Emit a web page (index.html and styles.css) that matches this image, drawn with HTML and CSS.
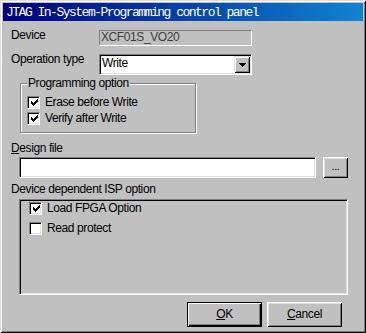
FILE: index.html
```html
<!DOCTYPE html>
<html lang="en">
<head>
  <meta charset="UTF-8">
  <meta name="viewport" content="width=device-width, initial-scale=1.0">
  <title>JTAG In-System-Programming control panel</title>
  <link rel="stylesheet" href="styles.css">
</head>
<body>

<div class="window">
  <div class="titlebar">JTAG In-System-Programming control panel</div>

  <div class="content">
    <div class="row row-device">
      <span class="label">Device</span>
      <div class="static-field">XCF01S_VO20</div>
    </div>

    <div class="row row-op">
      <span class="label">Operation type</span>
      <div class="combo">
        <span class="combo-text">Write</span>
        <span class="combo-btn">
          <svg width="7" height="4" viewBox="0 0 7 4" shape-rendering="crispEdges"><path d="M0 0h7v1h-7z M1 1h5v1h-5z M2 2h3v1h-3z M3 3h1v1h-1z" fill="#000"/></svg>
        </span>
      </div>
    </div>

    <div class="group">
      <span class="group-title">Programming option</span>
      <div class="group-body">
        <div class="check">
          <span class="box">
            <svg width="7" height="7" viewBox="0 0 7 7" shape-rendering="crispEdges"><path d="M6 0h1v1h-1z M5 1h2v1h-2z M0 2h1v1h-1z M4 2h3v1h-3z M0 3h2v1h-2z M3 3h3v1h-3z M0 4h5v1h-5z M1 5h3v1h-3z M2 6h1v1h-1z" fill="#000"/></svg>
          </span>
          <span class="check-text">Erase before Write</span>
        </div>
        <div class="check">
          <span class="box">
            <svg width="7" height="7" viewBox="0 0 7 7" shape-rendering="crispEdges"><path d="M6 0h1v1h-1z M5 1h2v1h-2z M0 2h1v1h-1z M4 2h3v1h-3z M0 3h2v1h-2z M3 3h3v1h-3z M0 4h5v1h-5z M1 5h3v1h-3z M2 6h1v1h-1z" fill="#000"/></svg>
          </span>
          <span class="check-text">Verify after Write</span>
        </div>
      </div>
    </div>

    <div class="caption caption-design"><u>D</u>esign file</div>
    <div class="file-row">
      <div class="edit"></div>
      <div class="btn btn-browse">...</div>
    </div>

    <div class="caption caption-isp">Device dependent ISP option</div>
    <div class="frame">
      <div class="check check-wide">
        <span class="box">
          <svg width="7" height="7" viewBox="0 0 7 7" shape-rendering="crispEdges"><path d="M6 0h1v1h-1z M5 1h2v1h-2z M0 2h1v1h-1z M4 2h3v1h-3z M0 3h2v1h-2z M3 3h3v1h-3z M0 4h5v1h-5z M1 5h3v1h-3z M2 6h1v1h-1z" fill="#000"/></svg>
        </span>
        <span class="check-text">Load FPGA Option</span>
      </div>
      <div class="check check-wide">
        <span class="box"></span>
        <span class="check-text">Read protect</span>
      </div>
    </div>

    <div class="buttons">
      <div class="btn btn-default"><u>O</u>K</div>
      <div class="btn"><u>C</u>ancel</div>
    </div>
  </div>
</div>

</body>
</html>
```

FILE: styles.css
```css
body {
  margin: 0;
  background: #c0c0c0;
  font-family: "Liberation Sans", Arial, sans-serif;
  font-size: 12px;
  letter-spacing: -0.4px;
  color: #000;
}

.window {
  box-sizing: border-box;
  width: 366px;
  height: 333px;
  padding: 3px;
  background: #c0c0c0;
  box-shadow: inset 1px 1px 0 #dfdfdf, inset -1px -1px 0 #000,
              inset 2px 2px 0 #fff, inset -2px -2px 0 #808080;
}

.titlebar {
  box-sizing: border-box;
  height: 18px;
  padding: 1px 0 0 3px;
  line-height: 17px;
  background: linear-gradient(to right, #000080, #1084d0);
  color: #fff;
  font-family: "Liberation Mono", monospace;
  font-size: 13px;
  letter-spacing: -1.5px;
  white-space: nowrap;
}

.content {
  padding-left: 8px;
}

.row {
  display: flex;
  align-items: flex-start;
}

.label {
  width: 88px;
  line-height: 14px;
  margin-top: -2px;
}

.row-device {
  margin-top: 9px;
  height: 16px;
}

.static-field {
  box-sizing: border-box;
  width: 153px;
  height: 16px;
  padding-left: 1px;
  line-height: 12px;
  border: 1px solid;
  border-color: #808080 #fff #fff #808080;
  color: #3c3c3c;
}

.row-op {
  margin-top: 8px;
  height: 21px;
}

.combo {
  box-sizing: border-box;
  width: 153px;
  height: 21px;
  display: flex;
  border: 1px solid;
  border-color: #808080 #fff #fff #808080;
  box-shadow: inset 1px 1px 0 #000, inset -1px -1px 0 #dfdfdf;
  background: #fff;
  padding: 1px;
}

.combo-text {
  flex: 1;
  padding-left: 1px;
  line-height: 14px;
}

.combo-btn {
  box-sizing: border-box;
  width: 16px;
  height: 17px;
  display: flex;
  align-items: center;
  justify-content: center;
  padding-left: 1px;
  background: #c0c0c0;
  box-shadow: inset 1px 1px 0 #dfdfdf, inset -1px -1px 0 #000,
              inset 2px 2px 0 #fff, inset -2px -2px 0 #808080;
}

.group {
  box-sizing: border-box;
  width: 176px;
  height: 50px;
  margin: 8px 0 0 9px;
  border: 1px solid #808080;
  box-shadow: 1px 1px 0 #fff, inset 1px 1px 0 #fff;
  display: flex;
  flex-direction: column;
  align-items: flex-start;
}

.group-title {
  margin: -8px 0 0 6px;
  padding: 0 1px;
  line-height: 14px;
  background: #c0c0c0;
}

.group-body {
  margin-top: 6px;
  padding-left: 6px;
}

.check {
  display: flex;
  align-items: flex-start;
  height: 16px;
}

.check-wide {
  height: 20px;
}

.box {
  box-sizing: border-box;
  width: 13px;
  height: 13px;
  padding: 2px 0 0 3px;
  background: #fff;
  border: 1px solid;
  border-color: #808080 #fff #fff #808080;
  box-shadow: inset 1px 1px 0 #000, inset -1px -1px 0 #dfdfdf;
}

.box svg {
  display: block;
}

.check-text {
  margin-left: 5px;
  line-height: 13px;
  white-space: nowrap;
}

.caption {
  line-height: 14px;
}

.caption-design {
  margin-top: 8px;
}

.caption-isp {
  margin-top: 4px;
}

.file-row {
  display: flex;
  margin: 2px 0 0 8px;
}

.edit {
  box-sizing: border-box;
  width: 297px;
  height: 21px;
  background: #fff;
  border: 1px solid;
  border-color: #808080 #fff #fff #808080;
  box-shadow: inset 1px 1px 0 #000, inset -1px -1px 0 #dfdfdf;
}

.btn {
  box-sizing: border-box;
  width: 75px;
  height: 25px;
  display: flex;
  align-items: center;
  justify-content: center;
  line-height: 13px;
  background: #c0c0c0;
  box-shadow: inset 1px 1px 0 #fff, inset -1px -1px 0 #000,
              inset 2px 2px 0 #dfdfdf, inset -2px -2px 0 #808080;
}

.btn-browse {
  width: 25px;
  height: 21px;
  margin-left: 7px;
  padding-bottom: 3px;
  font-size: 11px;
}

.frame {
  box-sizing: border-box;
  width: 329px;
  height: 96px;
  margin: 3px 0 0 8px;
  padding: 2px 0 0 9px;
  border: 1px solid;
  border-color: #808080 #fff #fff #808080;
  box-shadow: inset 1px 1px 0 #000, inset -1px -1px 0 #dfdfdf;
}

.buttons {
  display: flex;
  justify-content: flex-end;
  gap: 5px;
  margin-top: 7px;
  padding-right: 21px;
}

.btn-default {
  border: 1px solid #000;
  box-shadow: inset 1px 1px 0 #fff, inset -1px -1px 0 #000,
              inset -2px -2px 0 #808080;
}
```
